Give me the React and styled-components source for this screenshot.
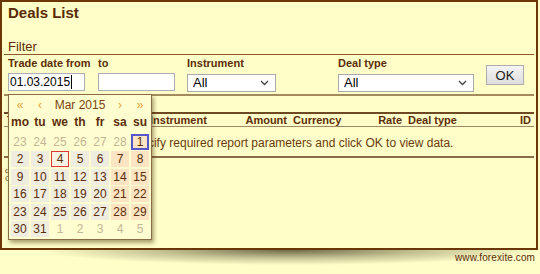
import React from "react";
import styled, { createGlobalStyle } from "styled-components";

const GlobalStyle = createGlobalStyle`
  html, body { margin: 0; padding: 0; background: #fffec8; }
  body {
    font-family: "Liberation Sans", Arial, sans-serif;
    color: #5c2d0a;
    width: 540px;
    height: 274px;
    overflow: hidden;
  }
  * { box-sizing: border-box; }
`;

const Page = styled.div`
  width: 540px;
  height: 274px;
  display: flex;
  flex-direction: column;
`;

const Panel = styled.div`
  width: 538px;
  height: 250px;
  border: 2px solid #6b3608;
  background: #fffec8;
  padding: 2px 2px 0 2px;
  display: flex;
  flex-direction: column;
`;

const Title = styled.h1`
  margin: 0 0 0 4px;
  font-size: 15px;
  line-height: 18px;
  font-weight: bold;
  color: #5a2a06;
`;

const FilterSection = styled.section`
  margin: 17px 0 0 0;
`;

const Legend = styled.div`
  font-size: 13px;
  line-height: 15px;
  padding-left: 4px;
  border-bottom: 1px solid #8a5a2a;
  color: #5c2d0a;
`;

const FilterRow = styled.div`
  display: flex;
  align-items: flex-start;
  padding: 2px 0 2px 4px;
  border-bottom: 2px solid #a48a5c;
`;

const Field = styled.div`
  position: relative;
  display: flex;
  flex-direction: column;
  width: ${(p) => p.$w}px;
  margin-left: ${(p) => p.$ml || 0}px;
`;

const Label = styled.label`
  font-size: 11px;
  line-height: 13px;
  font-weight: bold;
  color: #5c2d0a;
  margin-bottom: 3px;
  white-space: nowrap;
`;

const TextBox = styled.div`
  height: 18px;
  border: 1px solid #abadb3;
  background: #fff;
  padding-left: 1px;
  font-size: 12px;
  line-height: 16px;
  color: #000;
  display: flex;
  align-items: center;
`;

const Caret = styled.span`
  display: inline-block;
  width: 1px;
  height: 14px;
  background: #000;
  margin-left: 1px;
`;

const SelectBox = styled.div`
  height: 18px;
  margin-top: 1px;
  border: 1px solid #a9a9a9;
  background: #fff;
  display: flex;
  align-items: center;
  padding: 0 6px 0 0;
`;

const NativeSelect = styled.select`
  appearance: none;
  -webkit-appearance: none;
  border: none;
  outline: none;
  background: transparent;
  flex: 1;
  font-family: "Liberation Sans", Arial, sans-serif;
  font-size: 13px;
  color: #000;
  padding: 0 0 0 5px;
  height: 16px;
  line-height: 16px;
`;

const OkButton = styled.button`
  margin-left: 12px;
  margin-top: 8px;
  width: 38px;
  height: 20px;
  border: 1px solid #adadad;
  background: linear-gradient(#f4f4f4, #dedede);
  font-family: "Liberation Sans", Arial, sans-serif;
  font-size: 13px;
  color: #1a1a1a;
  padding: 0;
`;

const Table = styled.div`
  margin-top: 16px;
`;

const HeaderRow = styled.div`
  display: grid;
  grid-template-columns: 143px 93px 50px 80px 35px 95px 34px;
  border-top: 2px solid #6e4a24;
  border-bottom: 1px solid #a08662;
  height: 15px;
  font-size: 11px;
  font-weight: bold;
  line-height: 13px;
  color: #5c2d0a;
`;

const HeadCell = styled.div`
  padding: 0 3px;
  text-align: ${(p) => p.$align || "left"};
  white-space: nowrap;
`;

const MessageRow = styled.div`
  font-size: 12px;
  line-height: 14px;
  text-align: center;
  padding: 9px 0 6px 4px;
  border-bottom: 2px solid #8c6c48;
  color: #6b3a10;
`;

const Notes = styled.div`
  margin-top: 9px;
  padding-left: 1px;
  font-size: 8px;
  line-height: 8px;
  color: #5c3a1a;
`;

const Calendar = styled.div`
  position: absolute;
  top: calc(100% + 3px);
  left: 0;
  z-index: 5;
  width: 144px;
  height: 146px;
  border: 1px solid #8b6d45;
  background: #fffed0;
  padding: 2px;
  box-shadow: 2px 3px 4px rgba(70, 50, 10, 0.45);
`;

const CalGrid = styled.div`
  display: grid;
  grid-template-columns: repeat(7, 18px);
  column-gap: 2px;
  row-gap: ${(p) => p.$rowGap || 0}px;
  grid-auto-rows: 16px;
  margin-top: ${(p) => p.$mt || 0}px;
`;

const NavCell = styled.div`
  text-align: center;
  font-size: 12px;
  line-height: 16px;
  color: ${(p) => (p.$title ? "#7a4612" : "#e6a13a")};
  grid-column: ${(p) => (p.$title ? "3 / span 3" : "auto")};
  white-space: nowrap;
`;

const DayName = styled.div`
  text-align: center;
  font-size: 12px;
  font-weight: bold;
  line-height: 16px;
  color: #5c2d0a;
`;

const DayCell = styled.div`
  text-align: center;
  font-size: 12px;
  color: ${(p) => (p.$other ? "#c4b597" : "#5c2d0a")};
  background: ${(p) =>
    p.$other ? "transparent" : p.$today ? "#f6f2e4" : p.$weekend ? "#fde4c2" : "#efece0"};
  border: ${(p) =>
    p.$selected ? "2px solid #5555cc" : p.$today ? "1px solid #e63434" : "1px solid transparent"};
  line-height: ${(p) => (p.$selected ? 12 : 14)}px;
`;

const Footer = styled.div`
  flex: 1;
  display: flex;
  justify-content: flex-end;
  align-items: flex-start;
  padding: 3px 5px 0 0;
  background: radial-gradient(
    ellipse 250px 15px at 290px 0px,
    rgba(85, 80, 50, 0.85),
    rgba(95, 90, 55, 0.35) 55%,
    rgba(95, 90, 55, 0)
  );
`;

const Credit = styled.span`
  font-size: 10px;
  line-height: 10px;
  letter-spacing: 0.1px;
  color: #5c2d0a;
`;

const Chevron = () => (
  <svg width="9" height="6" viewBox="0 0 9 6">
    <polyline points="1,1 4.5,4.5 8,1" fill="none" stroke="#444" strokeWidth="1.3" />
  </svg>
);

const Select = ({ value }) => (
  <SelectBox>
    <NativeSelect defaultValue={value}>
      <option>All</option>
    </NativeSelect>
    <Chevron />
  </SelectBox>
);

const dayNames = ["mo", "tu", "we", "th", "fr", "sa", "su"];

function buildDays() {
  const out = [];
  const start = new Date(2015, 1, 23);
  for (let i = 0; i < 42; i++) {
    const d = new Date(start.getFullYear(), start.getMonth(), start.getDate() + i);
    const other = d.getMonth() !== 2;
    out.push({
      key: i,
      day: d.getDate(),
      other,
      weekend: i % 7 >= 5,
      selected: !other && d.getDate() === 1,
      today: !other && d.getDate() === 4,
    });
  }
  return out;
}

const days = buildDays();

const DatePicker = () => (
  <Calendar>
    <CalGrid>
      <NavCell>«</NavCell>
      <NavCell>‹</NavCell>
      <NavCell $title>Mar 2015</NavCell>
      <NavCell>›</NavCell>
      <NavCell>»</NavCell>
    </CalGrid>
    <CalGrid $mt={1}>
      {dayNames.map((n) => (
        <DayName key={n}>{n}</DayName>
      ))}
    </CalGrid>
    <CalGrid $mt={4} $rowGap={1.4}>
      {days.map((c) => (
        <DayCell
          key={c.key}
          $other={c.other}
          $weekend={c.weekend}
          $selected={c.selected}
          $today={c.today}
        >
          {c.day}
        </DayCell>
      ))}
    </CalGrid>
  </Calendar>
);

const columns = [
  { label: "Trade date", align: "left" },
  { label: "Instrument", align: "left" },
  { label: "Amount", align: "right" },
  { label: "Currency", align: "left" },
  { label: "Rate", align: "right" },
  { label: "Deal type", align: "left" },
  { label: "ID", align: "right" },
];

export default function App() {
  return (
    <Page>
      <GlobalStyle />
      <Panel>
        <Title>Deals List</Title>
        <FilterSection>
          <Legend>Filter</Legend>
          <FilterRow>
            <Field $w={77}>
              <Label>Trade date from</Label>
              <TextBox>
                01.03.2015
                <Caret />
              </TextBox>
              <DatePicker />
            </Field>
            <Field $w={77} $ml={13}>
              <Label>to</Label>
              <TextBox />
            </Field>
            <Field $w={89} $ml={12}>
              <Label>Instrument</Label>
              <Select value="All" />
            </Field>
            <Field $w={136} $ml={62}>
              <Label>Deal type</Label>
              <Select value="All" />
            </Field>
            <OkButton>OK</OkButton>
          </FilterRow>
        </FilterSection>
        <Table>
          <HeaderRow>
            {columns.map((c) => (
              <HeadCell key={c.label} $align={c.align}>
                {c.label}
              </HeadCell>
            ))}
          </HeaderRow>
          <MessageRow>
            Please specify required report parameters and click OK to view data.
          </MessageRow>
        </Table>
        <Notes>
          <div>q</div>
          <div>G</div>
        </Notes>
      </Panel>
      <Footer>
        <Credit>www.forexite.com</Credit>
      </Footer>
    </Page>
  );
}
